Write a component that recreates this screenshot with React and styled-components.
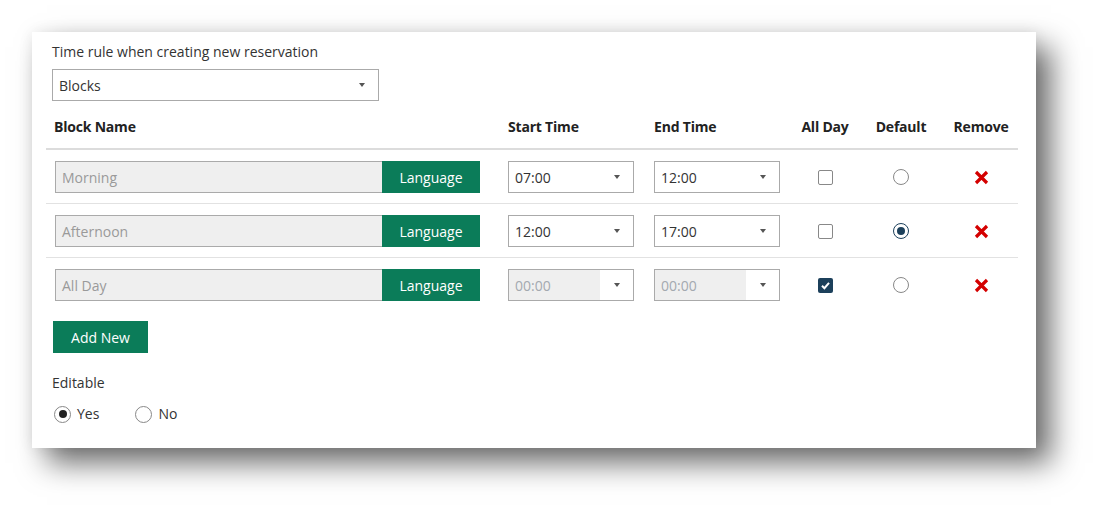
import React from 'react';
import styled, { createGlobalStyle } from 'styled-components';

const GlobalStyle = createGlobalStyle`
  body {
    margin: 0;
    background: #fff;
    font-family: "Open Sans", "Noto Sans", sans-serif;
    color: #333;
  }
`;

const Page = styled.div`
  box-sizing: border-box;
  height: 513px;
  padding: 32px 0 0 32px;
  overflow: hidden;
`;

const Panel = styled.div`
  box-sizing: border-box;
  width: 1004px;
  height: 416px;
  padding: 10px 24px 0 20px;
  background: #fff;
  box-shadow: 15px 15px 28px rgba(0, 0, 0, 0.58), 0 0 14px rgba(0, 0, 0, 0.07);
`;

const FieldLabel = styled.div`
  font-size: 14px;
  line-height: 20px;
  color: #333;
  margin-top: ${p => p.$mt || 0}px;
`;

const Select = styled.div`
  box-sizing: border-box;
  display: flex;
  align-items: stretch;
  width: ${p => p.$width}px;
  height: 32px;
  margin-top: ${p => p.$mt || 0}px;
  border: 1px solid #aaa;
  background: #fff;
  font-size: 14px;
`;

const SelectValue = styled.div`
  flex: 1;
  display: flex;
  align-items: center;
  padding-left: 6px;
  background: ${p => (p.$disabled ? '#efefef' : '#fff')};
  color: ${p => (p.$disabled ? '#a3a9b0' : '#333')};
`;

const CaretBox = styled.div`
  width: 33px;
  display: flex;
  align-items: center;
  justify-content: center;
  &::after {
    content: '';
    border-left: 3.5px solid transparent;
    border-right: 3.5px solid transparent;
    border-top: 4px solid #555;
  }
`;

const COLS = '454px 146px 146px 66px 86px 74px';

const Table = styled.div`
  margin: 8px -6px 0;
`;

const HeadRow = styled.div`
  display: grid;
  grid-template-columns: ${COLS};
  border-bottom: 2px solid #dcdcdc;
`;

const HeadCell = styled.div`
  padding: 8px ${p => (p.$center ? 0 : 8)}px 11px;
  font-size: 14px;
  line-height: 20px;
  font-weight: 700;
  color: #222;
  letter-spacing: -0.2px;
  text-align: ${p => (p.$center ? 'center' : 'left')};
`;

const Row = styled.div`
  display: grid;
  grid-template-columns: ${COLS};
  align-items: center;
  padding: 11px 0 10px;
  border-bottom: ${p => (p.$last ? 'none' : '1px solid #e2e2e2')};
`;

const Cell = styled.div`
  display: flex;
  align-items: center;
  justify-content: ${p => (p.$center ? 'center' : 'flex-start')};
  padding: 0 ${p => (p.$center ? 0 : 8)}px;
  padding-left: ${p => (p.$first ? 9 : p.$center ? 0 : 8)}px;
`;

const NameInput = styled.div`
  box-sizing: border-box;
  width: 327px;
  height: 32px;
  display: flex;
  align-items: center;
  padding-left: 6px;
  background: #efefef;
  border: 1px solid #aaa;
  border-right: none;
  color: #9a9a9a;
  font-size: 14px;
`;

const GreenButton = styled.button`
  box-sizing: border-box;
  width: ${p => p.$width}px;
  height: 32px;
  margin-top: ${p => p.$mt || 0}px;
  margin-left: ${p => p.$ml || 0}px;
  border: none;
  background: #0b7c59;
  color: #fff;
  font-family: inherit;
  font-size: 14px;
  padding: 0;
`;

const Check = styled.span`
  box-sizing: border-box;
  width: 15px;
  height: 15px;
  border-radius: 2px;
  border: ${p => (p.$checked ? 'none' : '1.5px solid #888')};
  background: ${p => (p.$checked ? '#1c405b' : '#fff')};
  display: flex;
  align-items: center;
  justify-content: center;
`;

const Radio = styled.span`
  box-sizing: border-box;
  width: ${p => p.$size}px;
  height: ${p => p.$size}px;
  border-radius: 50%;
  border: 1.5px solid ${p => p.$ring};
  background: #fff;
  display: flex;
  align-items: center;
  justify-content: center;
  flex-shrink: 0;
  &::after {
    content: '';
    display: ${p => (p.$checked ? 'block' : 'none')};
    width: 8px;
    height: 8px;
    border-radius: 50%;
    background: ${p => p.$dot};
  }
`;

const RadioGroup = styled.div`
  display: flex;
  align-items: center;
  margin-top: 11px;
  padding-left: 2px;
  gap: 36px;
`;

const RadioOption = styled.label`
  display: flex;
  align-items: center;
  gap: 6px;
  font-size: 14px;
  line-height: 20px;
  color: #333;
`;

const RemoveIcon = () => (
  <svg width="15" height="15" viewBox="0 0 15 15">
    <path d="M2 2 L13 13 M13 2 L2 13" stroke="#d40000" strokeWidth="3.2" strokeLinecap="butt" />
  </svg>
);

const TimeSelect = ({ value, disabled }) => (
  <Select $width={126}>
    <SelectValue $disabled={disabled}>{value}</SelectValue>
    <CaretBox />
  </Select>
);

const rows = [
  { name: 'Morning', start: '07:00', end: '12:00', allDay: false, def: false },
  { name: 'Afternoon', start: '12:00', end: '17:00', allDay: false, def: true },
  { name: 'All Day', start: '00:00', end: '00:00', allDay: true, def: false },
];

export default function App() {
  return (
    <Page>
      <GlobalStyle />
      <Panel>
        <FieldLabel>Time rule when creating new reservation</FieldLabel>
        <Select $width={327} $mt={7}>
          <SelectValue>Blocks</SelectValue>
          <CaretBox />
        </Select>

        <Table>
          <HeadRow>
            <HeadCell>Block Name</HeadCell>
            <HeadCell>Start Time</HeadCell>
            <HeadCell>End Time</HeadCell>
            <HeadCell $center>All Day</HeadCell>
            <HeadCell $center>Default</HeadCell>
            <HeadCell $center>Remove</HeadCell>
          </HeadRow>
          {rows.map((r, i) => (
            <Row key={r.name} $last={i === rows.length - 1}>
              <Cell $first>
                <NameInput>{r.name}</NameInput>
                <GreenButton $width={98}>Language</GreenButton>
              </Cell>
              <Cell>
                <TimeSelect value={r.start} disabled={r.allDay} />
              </Cell>
              <Cell>
                <TimeSelect value={r.end} disabled={r.allDay} />
              </Cell>
              <Cell $center>
                <Check $checked={r.allDay}>
                  {r.allDay && (
                    <svg width="11" height="11" viewBox="0 0 11 11">
                      <path d="M2 5.8 L4.4 8.2 L9 2.8" stroke="#fff" strokeWidth="2" fill="none" />
                    </svg>
                  )}
                </Check>
              </Cell>
              <Cell $center>
                <Radio
                  $size={16}
                  $checked={r.def}
                  $ring={r.def ? '#1c405b' : '#888'}
                  $dot="#1c405b"
                />
              </Cell>
              <Cell $center>
                <RemoveIcon />
              </Cell>
            </Row>
          ))}
        </Table>

        <GreenButton $width={95} $mt={10} $ml={1}>Add New</GreenButton>

        <FieldLabel $mt={20}>Editable</FieldLabel>
        <RadioGroup>
          <RadioOption>
            <Radio $size={17} $checked $ring="#888" $dot="#222" />
            Yes
          </RadioOption>
          <RadioOption>
            <Radio $size={17} $ring="#888" $dot="#222" />
            No
          </RadioOption>
        </RadioGroup>
      </Panel>
    </Page>
  );
}
